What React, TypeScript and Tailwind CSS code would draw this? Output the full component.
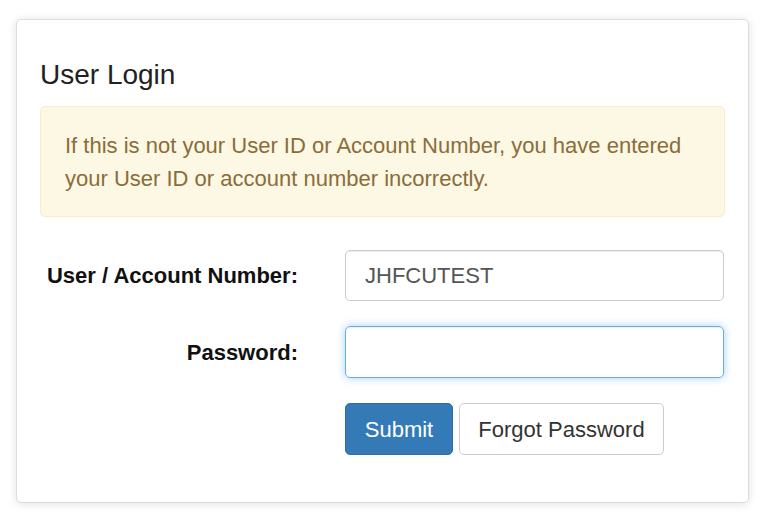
import React, { useState } from 'react';

const App = () => {
  const [user, setUser] = useState('JHFCUTEST');
  const [password, setPassword] = useState('');

  return (
    <div className="w-[764px] h-[524px] bg-white pt-[19px] pl-[16px] font-['Liberation_Sans',Arial,sans-serif]">
      <div className="w-[733px] h-[484px] bg-white border border-[#dcdcdc] rounded-[5px] shadow-[0_1px_10px_rgba(0,0,0,0.12)] px-[23px]">
        <h1 className="mt-[38px] text-[28px] leading-[34px] text-[#222] font-normal">User Login</h1>

        <div className="mt-[14px] bg-[#fcf8e3] border border-[#faebcc] rounded-[5px] text-[#8a6d3b] text-[22px] leading-[33px] px-[24px] pt-[22px] pb-[21px]">
          If this is not your User ID or Account Number, you have entered your User ID or account number incorrectly.
        </div>

        <div className="mt-[33px] flex flex-col gap-[25px]">
          <div className="flex items-center">
            <label className="w-[258px] text-right font-bold text-[22px] text-[#111]">User / Account Number:</label>
            <input
              value={user}
              onChange={(e) => setUser(e.target.value)}
              className="ml-[47px] w-[379px] h-[51px] border border-[#ccc] rounded-[5px] px-[19px] text-[22px] text-[#555] outline-none shadow-[inset_0_1px_1px_rgba(0,0,0,0.075)]"
            />
          </div>
          <div className="flex items-center">
            <label className="w-[258px] text-right font-bold text-[22px] text-[#111]">Password:</label>
            <input
              type="password"
              value={password}
              onChange={(e) => setPassword(e.target.value)}
              className="ml-[47px] w-[379px] h-[52px] border border-[#66afe9] rounded-[5px] px-[19px] text-[22px] text-[#555] outline-none shadow-[inset_0_1px_1px_rgba(0,0,0,0.075),0_0_8px_rgba(102,175,233,0.6)]"
            />
          </div>
          <div className="flex pl-[305px] gap-[6px]">
            <button className="w-[108px] h-[52px] bg-[#337ab7] border border-[#2e6da4] rounded-[5px] text-white text-[22px]">Submit</button>
            <button className="w-[205px] h-[52px] bg-white border border-[#ccc] rounded-[5px] text-[#333] text-[22px]">Forgot Password</button>
          </div>
        </div>
      </div>
    </div>
  );
};

export default App;
